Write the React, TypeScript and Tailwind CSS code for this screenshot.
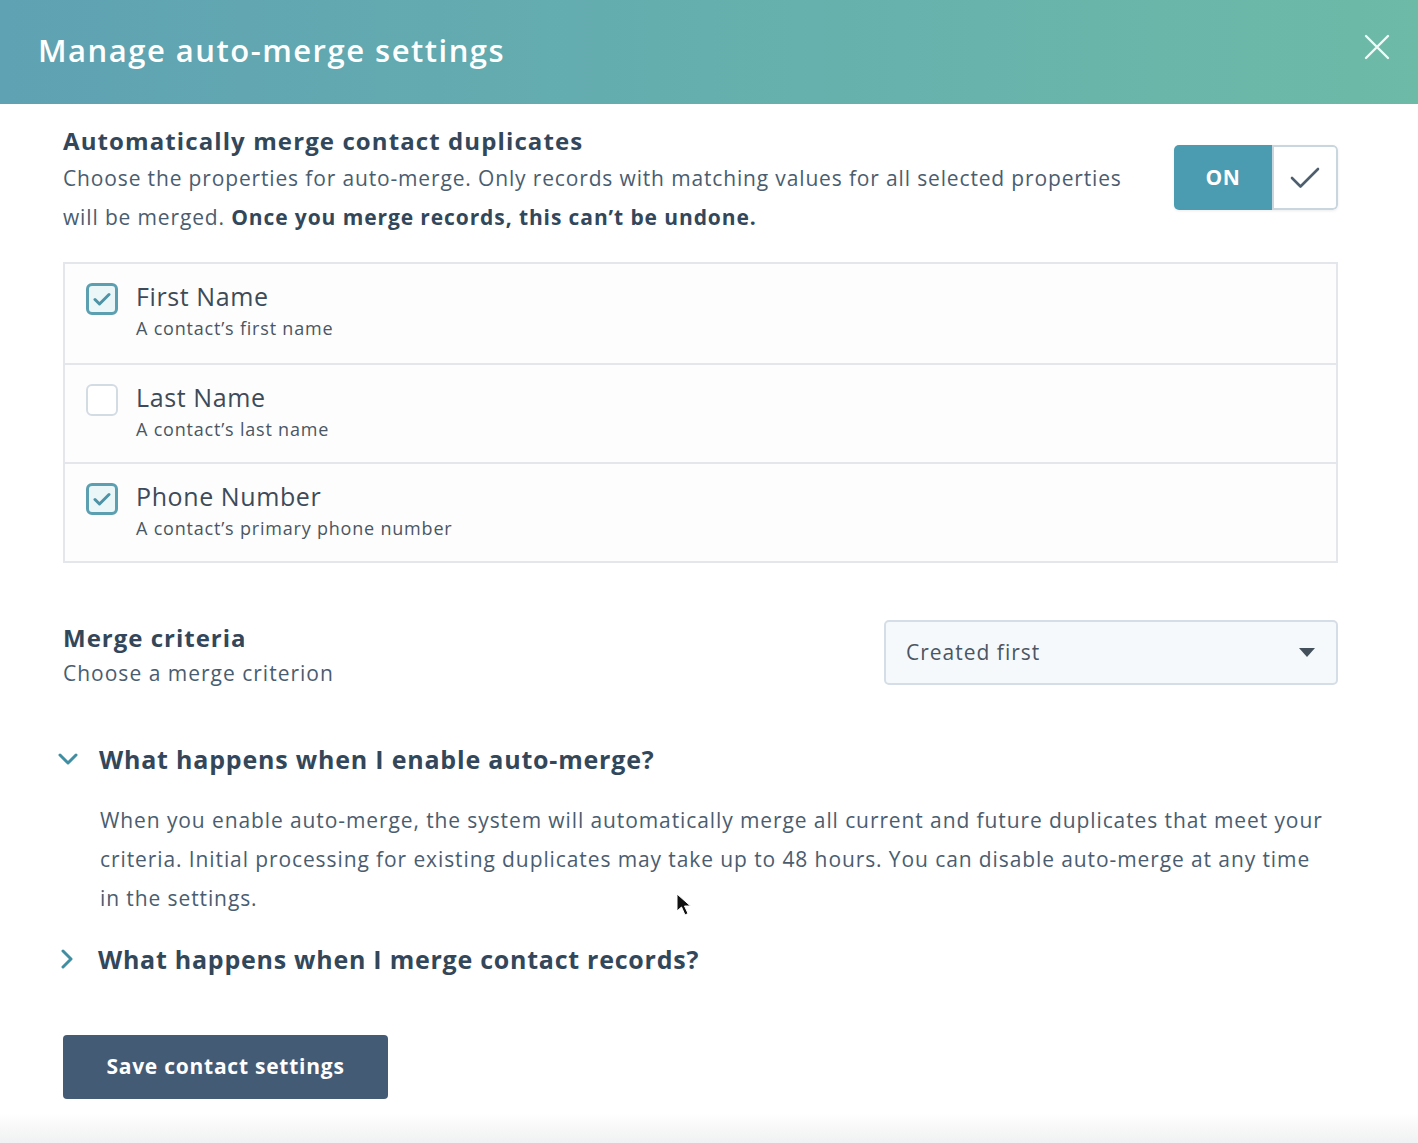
import { useState } from "react";

const PROPERTIES = [
  { label: "First Name", hint: "A contact’s first name", checked: true },
  { label: "Last Name", hint: "A contact’s last name", checked: false },
  { label: "Phone Number", hint: "A contact’s primary phone number", checked: true },
];

function CheckBox({ checked }: { checked: boolean }) {
  if (!checked) {
    return <div className="w-[32px] h-[32px] rounded-[6px] border-2 border-[#d3dbe3] bg-white shrink-0" />;
  }
  return (
    <div className="w-[32px] h-[32px] rounded-[6px] border-[3px] border-[#5c9fb0] bg-[#eaf6f8] shrink-0 flex items-center justify-center">
      <svg width="18" height="14" viewBox="0 0 18 14" fill="none">
        <path d="M2 7.5 L6.5 12 L16 2.5" stroke="#4e93a5" strokeWidth="3" strokeLinecap="round" strokeLinejoin="round" />
      </svg>
    </div>
  );
}

export default function App() {
  const [open, setOpen] = useState(true);
  const [props, setProps] = useState(PROPERTIES);

  return (
    <div className="relative w-[1418px] h-[1143px] overflow-hidden bg-white text-[#33475b]" style={{ fontFamily: "'Open Sans', 'Noto Sans', sans-serif" }}>
      {/* Header */}
      <div className="h-[104px] bg-gradient-to-r from-[#5fa2b3] via-[#65afae] to-[#6dbaa7] flex items-center justify-between pl-[38px] pr-[26px]">
        <h1 className="text-[31px] font-semibold text-white tracking-[1.5px] pb-[4px]">Manage auto-merge settings</h1>
        <button className="w-[30px] h-[30px] flex items-center justify-center -mt-[10px]">
          <svg width="26" height="26" viewBox="0 0 26 26" fill="none">
            <path d="M2 2 L24 24 M24 2 L2 24" stroke="#eefaf7" strokeWidth="2.4" strokeLinecap="round" />
          </svg>
        </button>
      </div>

      <div className="px-[63px] pr-[80px]">
        {/* Auto merge toggle */}
        <div className="flex items-start justify-between pt-[21px]">
          <div className="w-[1075px]">
            <h2 className="text-[24px] font-bold leading-[32px] tracking-[1.1px] text-[#33475b]">Automatically merge contact duplicates</h2>
            <p className="text-[21px] leading-[39px] tracking-[0.85px] text-[#4a5d70] mt-[2px]">
              Choose the properties for auto-merge. Only records with matching values for all selected properties will be merged.{" "}
              <strong className="font-bold text-[#33475b] tracking-[0.9px]">Once you merge records, this can’t be undone.</strong>
            </p>
          </div>
          <div className="flex mt-[20px] ml-[2px] rounded-[5px] overflow-hidden shadow-[0_1px_3px_rgba(0,0,0,0.08)]">
            <div className="w-[98px] h-[65px] bg-[#4b9bb1] flex items-center justify-center text-white text-[21px] font-bold tracking-[0.5px]">ON</div>
            <div className="w-[66px] h-[65px] bg-white border-2 border-[#c9d6dd] rounded-r-[5px] flex items-center justify-center">
              <svg width="32" height="24" viewBox="0 0 32 24" fill="none">
                <path d="M3 12 L11.5 20.5 L29 3" stroke="#4d5f6f" strokeWidth="2.6" strokeLinecap="round" strokeLinejoin="round" />
              </svg>
            </div>
          </div>
        </div>

        {/* Property list */}
        <div className="mt-[25px] border-2 border-[#e3e7ec] bg-[#fdfdfd]">
          {props.map((p, i) => (
            <div
              key={p.label}
              onClick={() => setProps(props.map((q, j) => (j === i ? { ...q, checked: !q.checked } : q)))}
              className={`h-[99px] flex items-start gap-[18px] pl-[21px] pt-[19px] cursor-pointer ${i > 0 ? "border-t-2 border-[#e3e7ec]" : ""}`}
            >
              <CheckBox checked={p.checked} />
              <div className="-mt-[4px]">
                <div className="text-[25px] leading-[34px] tracking-[0.6px] text-[#3d4b59]">{p.label}</div>
                <div className="text-[18px] leading-[28px] tracking-[0.8px] text-[#4a5663] mt-[1px]">{p.hint}</div>
              </div>
            </div>
          ))}
        </div>

        {/* Merge criteria */}
        <div className="flex items-start justify-between mt-[58px]">
          <div className="pt-[1px]">
            <h3 className="text-[24px] font-bold leading-[32px] tracking-[1px] text-[#33475b]">Merge criteria</h3>
            <p className="text-[21px] leading-[34px] tracking-[1px] text-[#4a5d70] mt-[2px]">Choose a merge criterion</p>
          </div>
          <div className="w-[454px] h-[65px] -mt-[1px] border-2 border-[#d5dee6] rounded-[5px] bg-[#f6f9fb] flex items-center justify-between pl-[20px] pr-[20px]">
            <span className="text-[21px] tracking-[1px] text-[#4a5663]">Created first</span>
            <svg width="18" height="11" viewBox="0 0 18 11">
              <path d="M1 1 L17 1 L9 10 Z" fill="#44505c" />
            </svg>
          </div>
        </div>

        {/* Accordions */}
        <div className="mt-[52px]">
          <button onClick={() => setOpen(!open)} className="flex items-center gap-[21px] -ml-[5px]">
            <svg width="20" height="14" viewBox="0 0 20 14" fill="none" className={open ? "" : "-rotate-90"}>
              <path d="M2 3 L10 11 L18 3" stroke="#3f8ea2" strokeWidth="3" strokeLinecap="round" strokeLinejoin="round" />
            </svg>
            <span className="text-[25px] font-bold leading-[34px] tracking-[0.8px] text-[#33475b]">What happens when I enable auto-merge?</span>
          </button>
          {open && (
            <p className="pl-[37px] pr-[12px] mt-[25px] text-[21px] leading-[39px] tracking-[0.9px] text-[#4a5d70]">
              When you enable auto-merge, the system will automatically merge all current and future duplicates that meet your criteria. Initial processing for existing duplicates may take up to 48 hours. You can disable auto-merge at any time in the settings.
            </p>
          )}
          <button className="flex items-center gap-[24px] mt-[24px] -ml-[3px]">
            <svg width="14" height="20" viewBox="0 0 14 20" fill="none">
              <path d="M3 2 L11 10 L3 18" stroke="#3f8ea2" strokeWidth="3" strokeLinecap="round" strokeLinejoin="round" />
            </svg>
            <span className="text-[25px] font-bold leading-[34px] tracking-[0.75px] text-[#33475b]">What happens when I merge contact records?</span>
          </button>
        </div>

        {/* Save */}
        <button className="mt-[59px] w-[325px] h-[64px] rounded-[4px] bg-[#445b76] text-white text-[21px] font-bold tracking-[0.75px]">
          Save contact settings
        </button>
      </div>

      {/* Bottom fade */}
      <div className="absolute left-0 right-0 bottom-0 h-[30px] bg-gradient-to-b from-white to-[#f0f1f2]" />

      {/* Mouse cursor */}
      <svg className="absolute left-[676px] top-[893px]" width="16" height="24" viewBox="0 0 16 24">
        <path d="M1 1 L1 18 L5.5 14 L9 22 L12 20.5 L8.5 13 L14.5 13 Z" fill="#111" stroke="#fff" strokeWidth="1" />
      </svg>
    </div>
  );
}
